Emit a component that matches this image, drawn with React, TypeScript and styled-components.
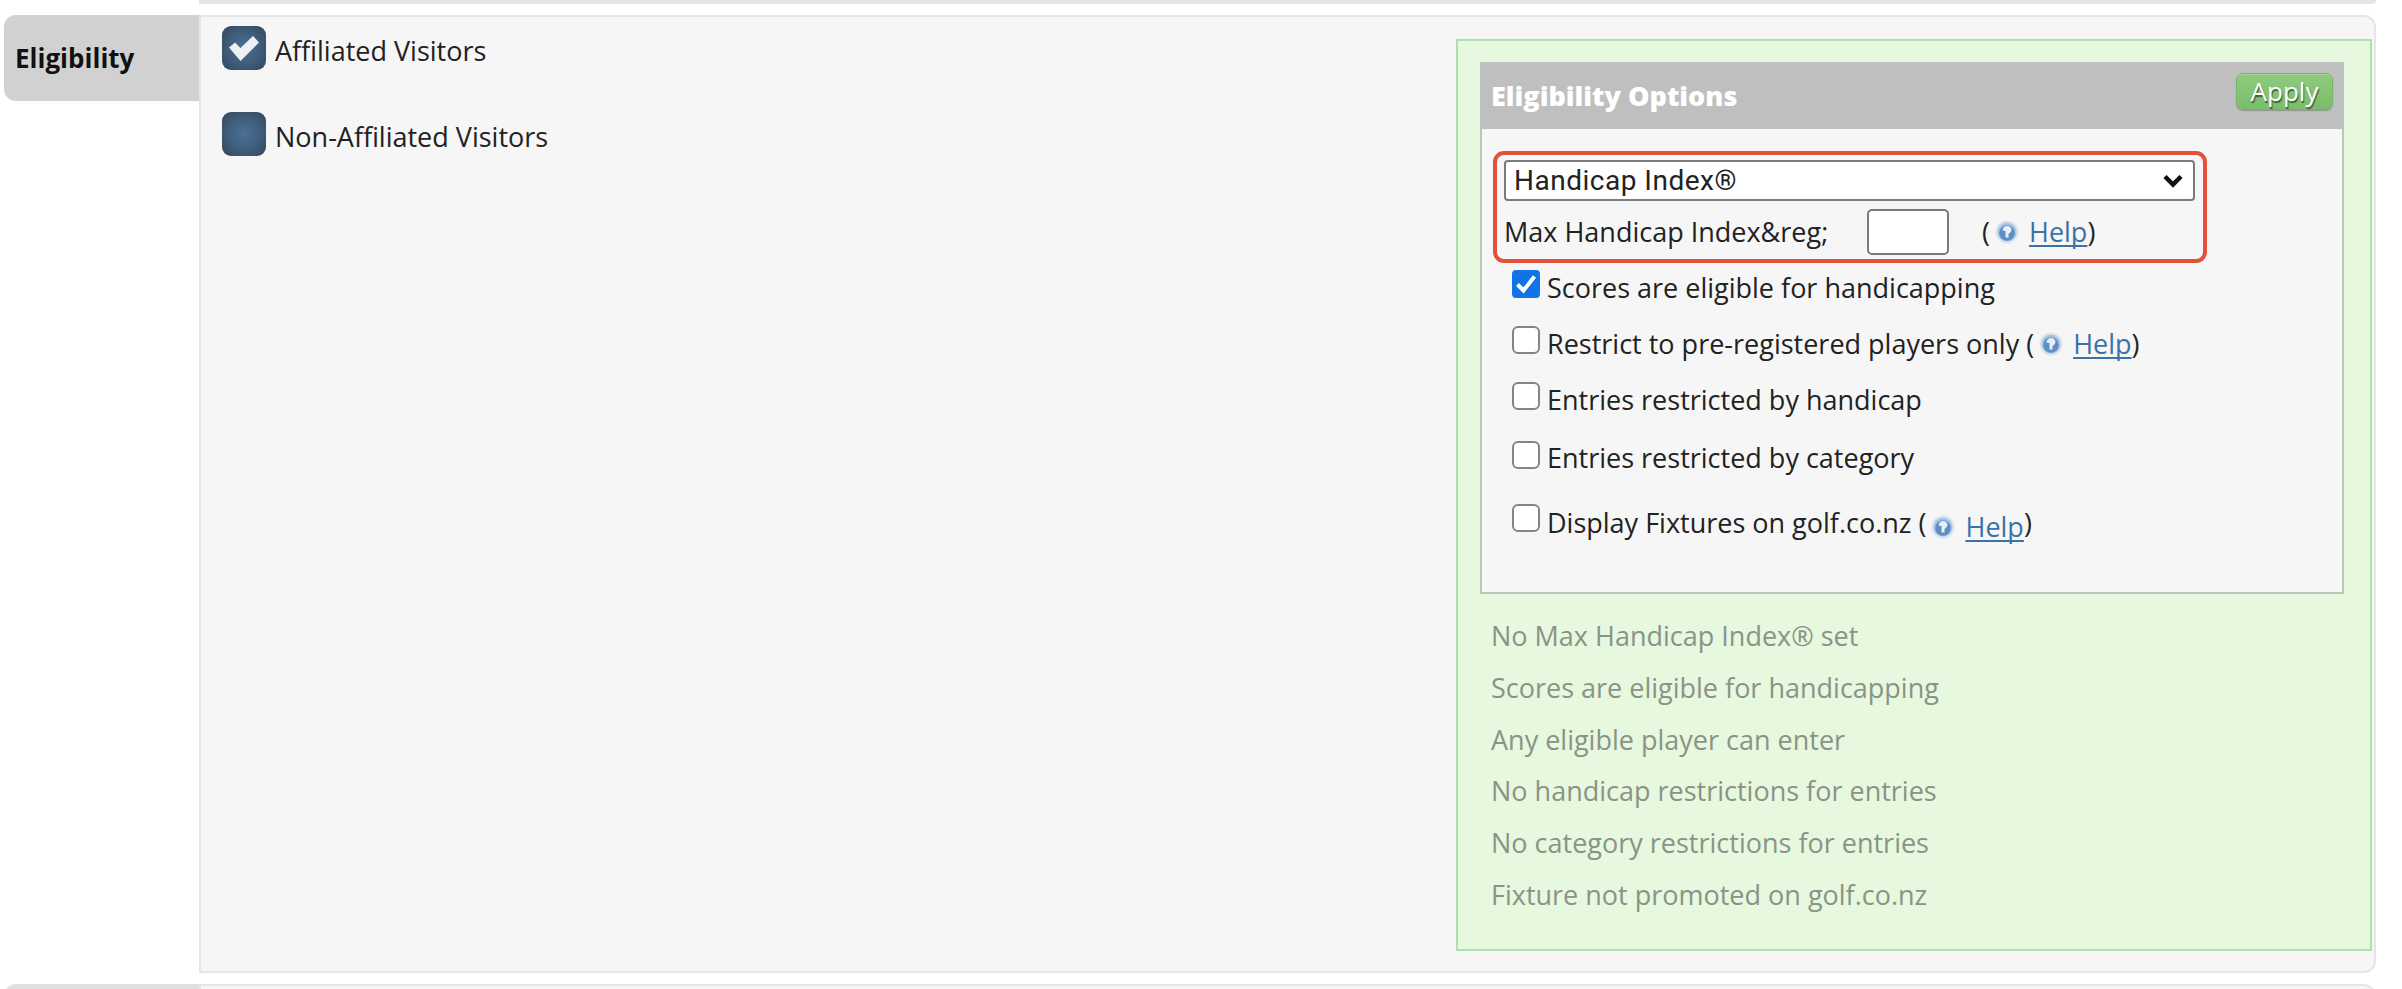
import React, { useState } from "react";
import styled, { createGlobalStyle } from "styled-components";

const GlobalStyle = createGlobalStyle`
  * {
    box-sizing: border-box;
  }

  body {
    margin: 0;
    background: #fff;
    color: #222;
    font-family: "Open Sans", "Noto Sans", sans-serif;
    font-size: 27px;
    overflow: hidden;
  }
`;

const Page = styled.div`
  display: flex;
  flex-direction: column;
  gap: 11px;
  height: 989px;
  padding-left: 4px;
  overflow: hidden;
`;

const Section = styled.section<{ $height: number }>`
  display: flex;
  align-items: flex-start;
  flex: none;
  height: ${(p) => p.$height}px;
`;

const Tab = styled.div<{ $color: string }>`
  width: 195px;
  height: 86px;
  padding: 25px 0 0 11px;
  border-radius: 12px 0 0 12px;
  background: ${(p) => p.$color};
  color: #111;
  font-size: 26px;
  font-weight: 700;
  line-height: 36px;
`;

const TabSpacer = styled.div`
  width: 195px;
`;

const Panel = styled.div<{ $corners: string }>`
  display: flex;
  justify-content: space-between;
  width: 2177px;
  height: 100%;
  border: 2px solid #e5e5e6;
  border-radius: ${(p) => p.$corners};
  background: #f6f6f6;
`;

const Visitors = styled.div`
  padding: 9px 0 0 21px;
`;

const Visitor = styled.div`
  display: flex;
  align-items: flex-start;
  height: 86px;
  line-height: 49px;
  cursor: pointer;
`;

const VisitorBox = styled.span`
  display: flex;
  align-items: center;
  justify-content: center;
  width: 44px;
  height: 44px;
  margin-right: 9px;
  border-radius: 9px;
  background: radial-gradient(circle, #4a7095 0%, #41607f 45%, #33485d 100%);
`;

const Summary = styled.div`
  width: 916px;
  height: 912px;
  margin: 22px 2px 0 0;
  padding: 21px 26px 0 22px;
  border: 2px solid #aee0aa;
  background: #e6f8de;
`;

const Options = styled.div`
  position: relative;
  height: 532px;
  border: 2px solid #c0c4bc;
  border-top: none;
  background: #f6f6f6;
`;

const OptionsHeader = styled.div`
  display: flex;
  justify-content: space-between;
  height: 67px;
  margin: 0 -2px;
  padding: 11px 11px 0 11px;
  background: #bfbfbf;
  color: #fff;
  font-weight: 800;
  font-size: 27px;
  line-height: 45px;
`;

const ApplyButton = styled.button`
  width: 97px;
  height: 37px;
  padding: 0 0 2px;
  border: 1px solid #78b56c;
  border-radius: 7px;
  background: linear-gradient(#8fcb80, #79bd69);
  box-shadow: inset 0 1px 0 #a5d998, 0 1px 1px rgba(0, 0, 0, 0.25);
  color: #fff;
  font: 26px/32px "Open Sans", sans-serif;
  text-shadow: 1px 2px 1px rgba(0, 0, 0, 0.5);
`;

const Highlight = styled.div`
  position: absolute;
  top: 89px;
  left: 11px;
  width: 714px;
  height: 112px;
  border: 4px solid #e5503c;
  border-radius: 11px;
  pointer-events: none;
`;

const SelectBox = styled.div`
  display: flex;
  align-items: center;
  justify-content: space-between;
  width: 691px;
  height: 41px;
  margin: 31px 0 0 22px;
  padding: 0 10px 0 8px;
  border: 2px solid #7b7b7b;
  border-radius: 4px;
  background: #fff;
  font-family: Roboto, "Liberation Sans", sans-serif;
  font-size: 28px;
  letter-spacing: 0.5px;
`;

const MaxRow = styled.div`
  display: flex;
  align-items: flex-start;
  height: 69px;
  padding: 8px 0 0 22px;
  line-height: 46px;
`;

const MaxLabel = styled.span`
  width: 363px;
`;

const MaxInput = styled.input`
  width: 82px;
  height: 46px;
  margin-right: 33px;
  border: 2px solid #7b7b7b;
  border-radius: 5px;
  background: #fff;
  font: inherit;
`;

const OptionRow = styled.div<{ $height: number; $boxTop?: number }>`
  display: flex;
  align-items: flex-start;
  height: ${(p) => p.$height}px;
  padding-left: 30px;
  line-height: 36px;
  white-space: pre;

  > svg {
    flex: none;
    margin: ${(p) => p.$boxTop ?? 0}px 7px 0 0;
  }
`;

const HelpWrap = styled.span<{ $drop?: number }>`
  display: inline-flex;
  align-items: center;

  > span {
    display: inline-flex;
    align-items: center;
    position: relative;
    top: ${(p) => p.$drop ?? 0}px;
  }
`;

const HelpGlyph = styled.svg`
  width: 24px;
  height: 24px;
  margin-left: 5px;
`;

const HelpLink = styled.a`
  margin-left: 10px;
  color: #3b73a8;
  text-decoration: underline;
  text-decoration-thickness: 2px;
  text-underline-offset: 3px;
  text-decoration-skip-ink: none;
`;

const StatusList = styled.ul`
  margin: 18px 0 0;
  padding: 0 0 0 11px;
  color: #8a9386;
  list-style: none;

  li {
    height: 51.8px;
    line-height: 47px;
  }
`;

const HelpIcon = () => (
  <HelpGlyph viewBox="0 0 24 24">
    <circle cx="12" cy="12" r="11.5" fill="#dbe5f1" />
    <circle cx="12" cy="12" r="9.5" fill="#a9c4e0" />
    <circle cx="12" cy="13" r="7.8" fill="#5f8fc2" />
    <path
      d="M7.5 10.5Q8 6 12 6t4.5 4q0 2.5-3 4v3.5h-3V11"
      fill="#e4effa"
    />
  </HelpGlyph>
);

const Checkbox = ({ checked }: { checked: boolean }) => (
  <svg width="28" height="28" viewBox="0 0 28 28">
    <rect
      x="1"
      y="1"
      width="26"
      height="26"
      rx={checked ? 3 : 5}
      fill={checked ? "#1273e6" : "#fff"}
      stroke={checked ? "#1273e6" : "#858585"}
      strokeWidth="2"
    />
    {checked && (
      <path d="M5.5 14.5l6 6L22.5 6.5" fill="none" stroke="#fff" strokeWidth="4" />
    )}
  </svg>
);

const Help = ({ drop }: { drop?: number }) => (
  <HelpWrap $drop={drop}>
    (
    <span>
      <HelpIcon />
      <HelpLink>Help</HelpLink>
    </span>
    )
  </HelpWrap>
);

const visitors = ["Affiliated Visitors", "Non-Affiliated Visitors"];

const options = [
  { label: "Scores are eligible for handicapping", height: 56 },
  { label: "Restrict to pre-registered players only ", height: 56, help: true },
  { label: "Entries restricted by handicap", height: 58 },
  { label: "Entries restricted by category", height: 65, boxTop: 1 },
  {
    label: "Display Fixtures on golf.co.nz ",
    height: 50,
    help: true,
    drop: 4,
    boxTop: -1,
  },
];

const statuses = [
  "No Max Handicap Index® set",
  "Scores are eligible for handicapping",
  "Any eligible player can enter",
  "No handicap restrictions for entries",
  "No category restrictions for entries",
  "Fixture not promoted on golf.co.nz",
];

const App: React.FC = () => {
  const [selected, setSelected] = useState<number[]>([0]);
  const [checked, setChecked] = useState<number[]>([0]);

  const toggle = (list: number[], i: number) =>
    list.includes(i) ? list.filter((n) => n !== i) : [...list, i];

  return (
    <Page>
      <GlobalStyle />
      <Section $height={4}>
        <TabSpacer />
        <Panel $corners="0 0 4px 0" />
      </Section>
      <Section $height={958}>
        <Tab $color="#d1d1d1">Eligibility</Tab>
        <Panel $corners="0 12px 12px 0">
          <Visitors>
            {visitors.map((name, i) => (
              <Visitor key={name} onClick={() => setSelected(toggle(selected, i))}>
                <VisitorBox>
                  {selected.includes(i) && (
                    <svg width="32" height="27" viewBox="0 0 32 27">
                      <path d="M1 12.5L7 7.5l5.5 5.5L25 1l6 6.5L12.5 26z" fill="#eef1f4" />
                    </svg>
                  )}
                </VisitorBox>
                {name}
              </Visitor>
            ))}
          </Visitors>
          <Summary>
            <Options>
              <OptionsHeader>
                Eligibility Options
                <ApplyButton>Apply</ApplyButton>
              </OptionsHeader>
              <SelectBox>
                Handicap Index®
                <svg width="20" height="14" viewBox="0 0 20 14">
                  <path d="M2 2.5l8 8 8-8" fill="none" stroke="#111" strokeWidth="4.5" />
                </svg>
              </SelectBox>
              <MaxRow>
                <MaxLabel>Max Handicap Index&amp;reg;</MaxLabel>
                <MaxInput />
                <Help />
              </MaxRow>
              {options.map((o, i) => (
                <OptionRow
                  key={o.label}
                  $height={o.height}
                  $boxTop={o.boxTop}
                  onClick={() => setChecked(toggle(checked, i))}
                >
                  <Checkbox checked={checked.includes(i)} />
                  {o.label}
                  {o.help && <Help drop={o.drop} />}
                </OptionRow>
              ))}
              <Highlight />
            </Options>
            <StatusList>
              {statuses.map((s) => (
                <li key={s}>{s}</li>
              ))}
            </StatusList>
          </Summary>
        </Panel>
      </Section>
      <Section $height={86}>
        <Tab $color="#dfdfdf" />
        <Panel $corners="0 12px 12px 0" />
      </Section>
    </Page>
  );
};

export default App;
